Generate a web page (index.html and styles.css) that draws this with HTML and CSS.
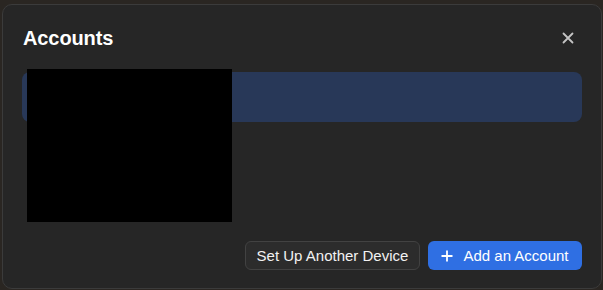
FILE: index.html
```html
<!DOCTYPE html>
<html>
<head>
<meta charset="utf-8">
<link rel="stylesheet" href="styles.css">
</head>
<body>
<div class="backdrop">
  <div class="dialog">
    <div class="header">
      <h1 class="title">Accounts</h1>
      <button class="close" aria-label="Close">
        <svg width="12" height="12" viewBox="0 0 12 12"><path d="M1.5 1.5 L10.5 10.5 M10.5 1.5 L1.5 10.5" stroke="#c4c4c4" stroke-width="1.8" stroke-linecap="round"/></svg>
      </button>
    </div>
    <div class="list">
      <div class="account-row"></div>
      <div class="redact"></div>
    </div>
    <div class="footer">
      <button class="btn btn-secondary">Set Up Another Device</button>
      <button class="btn btn-primary">
        <svg width="12" height="12" viewBox="0 0 12 12"><path d="M6 0.5 V11.5 M0.5 6 H11.5" stroke="#fff" stroke-width="1.8"/></svg>
        <span>Add an Account</span>
      </button>
    </div>
  </div>
</div>
</body>
</html>
```
FILE: styles.css
```css
* { box-sizing: border-box; }
html, body { margin: 0; padding: 0; }
body {
  width: 603px;
  height: 290px;
  background: #2a2622;
  font-family: "Liberation Sans", Arial, sans-serif;
  overflow: hidden;
}
.backdrop {
  padding: 4px 1px 1px 2px;
  height: 290px;
}
.dialog {
  height: 285px;
  background: #262626;
  border: 1px solid #3b3b3b;
  border-radius: 10px;
  display: flex;
  flex-direction: column;
  padding: 0 19px 0 19px;
}
.header {
  display: flex;
  align-items: center;
  justify-content: space-between;
  height: 67px;
  padding-bottom: 1px;
}
.title {
  margin: 0 0 0 1px;
  font-size: 20px;
  font-weight: bold;
  color: #ffffff;
  letter-spacing: -0.1px;
}
.close {
  background: none;
  border: none;
  padding: 0;
  margin-right: 8px;
  width: 12px;
  height: 12px;
  display: flex;
}
.list {
  position: relative;
  height: 150px;
}
.account-row {
  height: 50px;
  background: #283858;
  border-radius: 8px;
}
.redact {
  position: absolute;
  left: 5px;
  top: -3px;
  width: 205px;
  height: 153px;
  background: #000;
}
.footer {
  display: flex;
  justify-content: flex-end;
  gap: 8px;
  margin-top: 19px;
}
.btn {
  height: 29px;
  border-radius: 6px;
  font-family: "Liberation Sans", Arial, sans-serif;
  font-size: 15px;
  color: #f2f2f2;
  display: flex;
  align-items: center;
  justify-content: center;
  padding: 0 10px;
}
.btn-secondary {
  width: 175px;
  background: #2c2c2c;
  border: 1px solid #424242;
}
.btn-primary {
  width: 154px;
  background: #2f6fe3;
  border: none;
  gap: 10px;
  color: #ffffff;
}
```
